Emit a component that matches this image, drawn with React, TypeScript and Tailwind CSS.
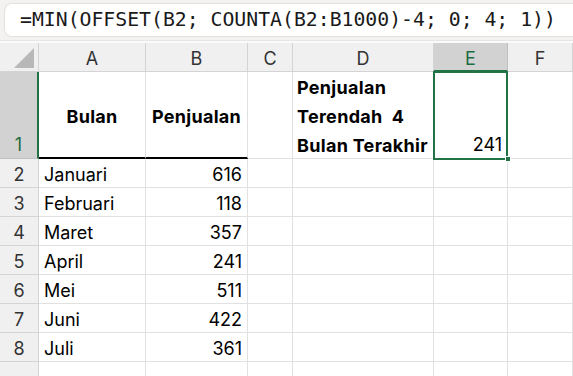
const months: [string, number][] = [
  ["Januari", 616],
  ["Februari", 118],
  ["Maret", 357],
  ["April", 241],
  ["Mei", 511],
  ["Juni", 422],
  ["Juli", 361],
];

const cols = ["A", "B", "C", "D", "E", "F"];

const cell = "border-r border-b border-[#e1e1e1] bg-white";
const head = "border-r border-b border-[#d4d4d4] bg-[#f0f0f0] flex items-center justify-center pt-[3px] text-[#333]";

const App = () => {
  return (
    <div className="w-[573px] h-[376px] overflow-hidden bg-white text-[18px] text-black font-['Inter',sans-serif]">
      <div className="h-[40px] bg-[#f3f2f1] pt-[3px] pl-[4px]">
        <div className="h-[34px] bg-white rounded-l-[8px] border border-r-0 border-[#e3e1df] flex items-center pl-[15px] whitespace-pre text-[19.8px] text-[#1a1a1a] font-['DejaVu_Sans_Mono',monospace]">
          =MIN(OFFSET(B2; COUNTA(B2:B1000)-4; 0; 4; 1))
        </div>
      </div>
      <div className="h-[3px] bg-[#fafafa] border-t border-[#e6e6e6]"></div>
      <div className="grid grid-cols-[39px_107px_102px_45px_141px_74px_1fr] grid-rows-[29px_87px_repeat(8,29px)]">
        <div className="border-r border-b border-[#d4d4d4] bg-[#f0f0f0] flex items-end justify-end pr-[4px] pb-[3px]">
          <svg width="20" height="20" viewBox="0 0 20 20">
            <polygon points="20,0 20,20 0,20" fill="#b8b8b8" />
          </svg>
        </div>
        {cols.map((c) =>
          c === "E" ? (
            <div key={c} className="bg-[#d2d2d2] border-r border-[#c0c0c0] border-b-2 border-b-[#217346] flex items-center justify-center pt-[4px] text-[#1e6b41]">
              {c}
            </div>
          ) : (
            <div key={c} className={head}>
              {c}
            </div>
          )
        )}

        {/* row 1 */}
        <div className="bg-[#d2d2d2] border-b border-[#c0c0c0] border-r-2 border-r-[#217346] flex items-end justify-center pb-[3px] leading-[20px] text-[#1e6b41]">
          1
        </div>
        <div className="border-r border-b-2 border-[#e1e1e1] border-b-black flex items-center justify-center pt-[3px] font-bold tracking-[0.3px]">
          Bulan
        </div>
        <div className="border-r border-b-2 border-[#e1e1e1] border-b-black flex items-center justify-center pt-[3px] font-bold tracking-[0.3px]">
          Penjualan
        </div>
        <div className={cell}></div>
        <div className={`${cell} flex flex-col pl-[4px] pt-[1px] font-bold tracking-[0.3px] leading-[29px] whitespace-pre`}>
          <span>Penjualan</span>
          <span>Terendah  4</span>
          <span>Bulan Terakhir</span>
        </div>
        <div className={`${cell} relative flex items-end justify-end pr-[5px] pb-[3px] leading-[20px]`}>
          241
          <div className="absolute -left-px -top-px w-[75px] h-[89px] border-2 border-[#217346]"></div>
          <div className="absolute right-[-4px] bottom-[-4px] w-[6px] h-[6px] bg-[#217346] border border-white"></div>
        </div>
        <div className={cell}></div>

        {months.map(([m, v], i) => (
          <div key={m} className="contents">
            <div className={head}>{i + 2}</div>
            <div className={`${cell} flex items-center pt-[3px] pl-[5px]`}>{m}</div>
            <div className={`${cell} flex items-center justify-end pt-[3px] pr-[5px]`}>{v}</div>
            <div className={cell}></div>
            <div className={cell}></div>
            <div className={cell}></div>
            <div className={cell}></div>
          </div>
        ))}

        <div className="border-r border-[#d4d4d4] bg-[#f0f0f0] flex justify-center pt-[10px] text-[#333]">9</div>
        {cols.map((c) => (
          <div key={c} className="border-r border-[#e1e1e1] bg-white"></div>
        ))}
      </div>
    </div>
  );
};

export default App;
